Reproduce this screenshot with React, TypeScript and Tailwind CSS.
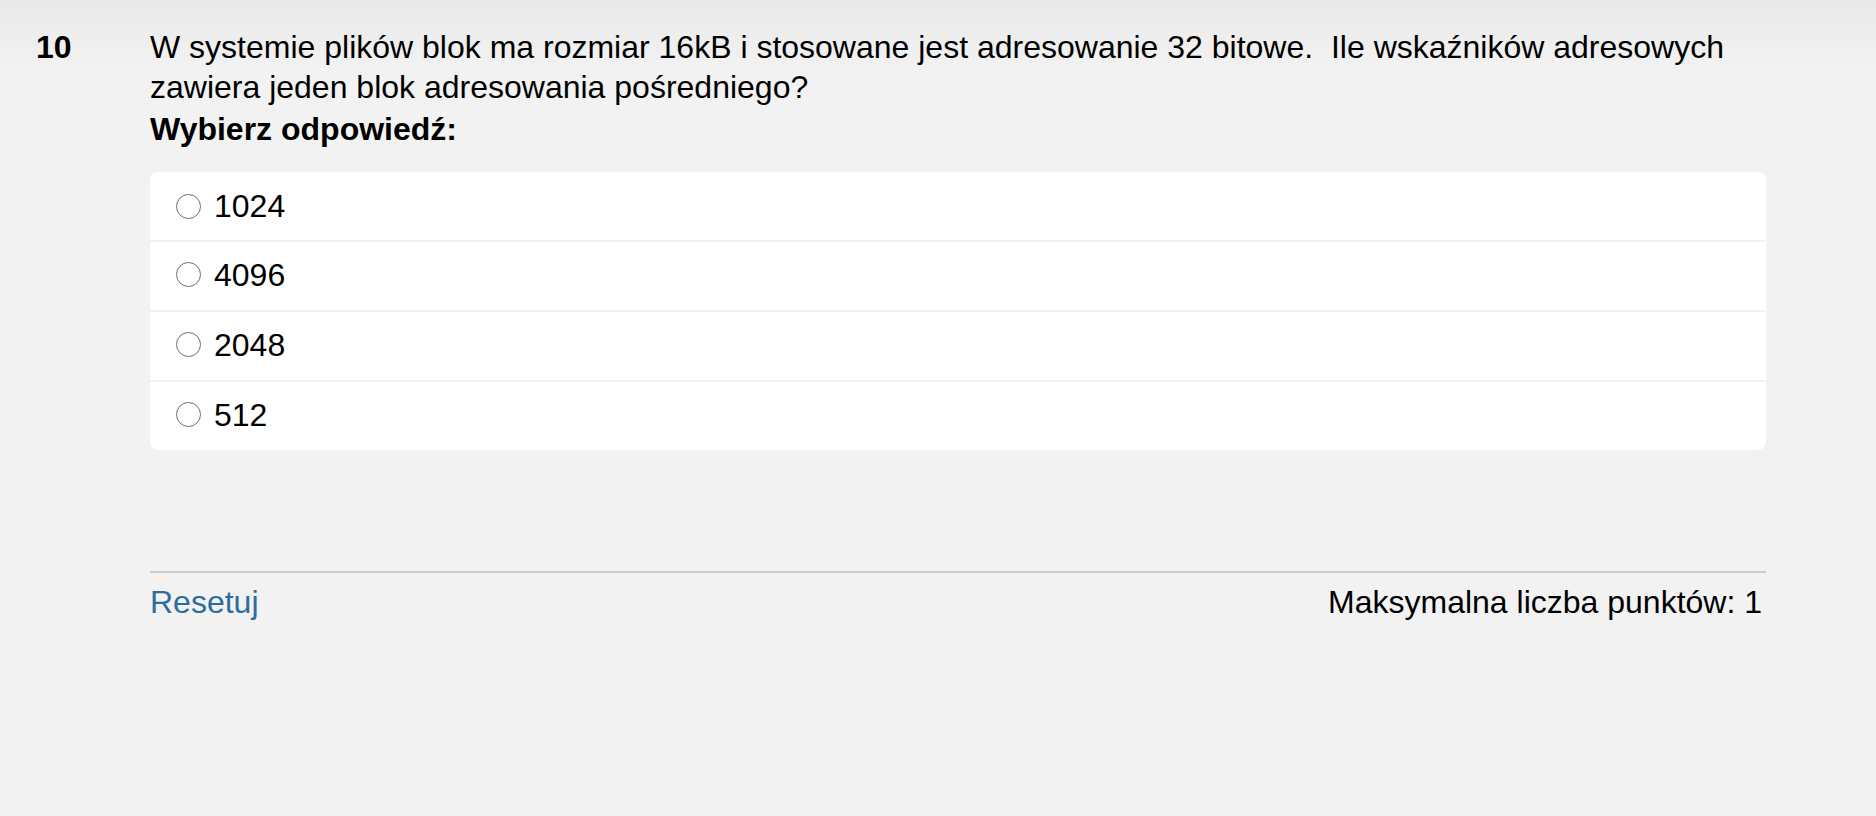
import React from "react";

const answers = ["1024", "4096", "2048", "512"];

export default function App() {
  return (
    <div
      className="min-h-screen w-full bg-[#f2f2f2] bg-[linear-gradient(to_bottom,#e9e9e9,#f2f2f2_70px)] text-black"
      style={{ fontFamily: '"Liberation Sans", Arial, sans-serif' }}
    >
      <div className="flex pt-[27px]">
        {/* question number */}
        <div className="w-[150px] shrink-0 pl-[36px] text-[32px] leading-[40px] font-bold">10</div>

        <div className="w-[1616px] shrink-0">
          <p className="text-[32px] leading-[40px] pr-[30px]">
            W systemie plików blok ma rozmiar 16kB i stosowane jest adresowanie 32 bitowe.{"\u00a0"} Ile wskaźników adresowych
            zawiera jeden blok adresowania pośredniego?
          </p>
          <p className="mt-[2px] text-[32px] leading-[40px] font-bold">Wybierz odpowiedź:</p>

          <div className="mt-[23px] bg-white rounded-[8px] overflow-hidden">
            {answers.map((a, i) => (
              <label
                key={a}
                className={
                  "flex items-center gap-[13px] pl-[26px] cursor-pointer " +
                  (i > 0 ? "h-[70px] pb-[3px] border-t-2 border-[#f2f2f2]" : "h-[68px]")
                }
              >
                <span className="w-[25px] h-[25px] shrink-0 rounded-full border-[1.5px] border-[#6e6e6e] bg-white" />
                <span className="text-[32px] leading-[40px]">{a}</span>
              </label>
            ))}
          </div>

          <div className="mt-[121px] border-t-2 border-[#cccccc]" />

          <div className="mt-[9px] flex items-start justify-between text-[32px] leading-[40px]">
            <a href="#" className="text-[#2c6d9c]">Resetuj</a>
            <span className="pr-[4px]">Maksymalna liczba punktów: 1</span>
          </div>
        </div>
      </div>
    </div>
  );
}
